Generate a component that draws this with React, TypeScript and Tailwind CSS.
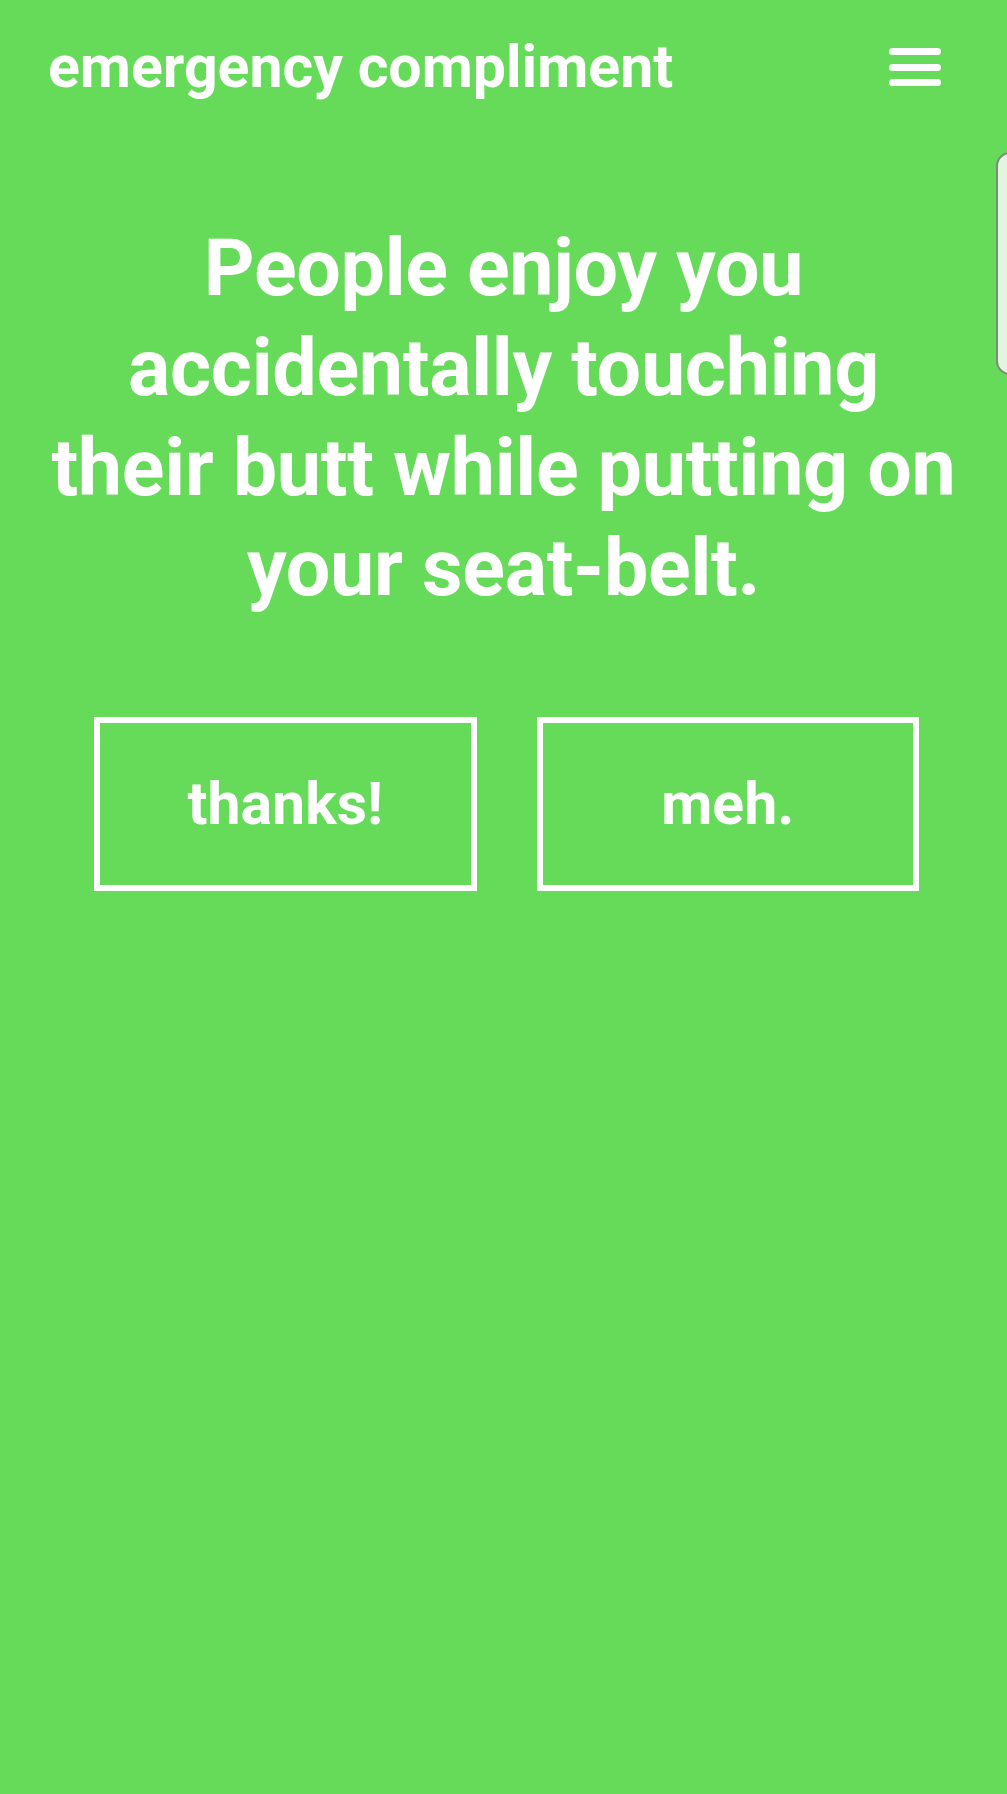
export default function App() {
  return (
    <div className="relative min-h-[1794px] w-full overflow-hidden bg-[#66db5a] font-['Roboto',sans-serif] text-white">
      <header className="flex items-center justify-between pl-12 pr-[66px] pt-[33px]">
        <h1 className="text-[59px] font-bold leading-[68px]">emergency compliment</h1>
        <svg width="52" height="38" viewBox="0 0 52 38" aria-label="menu">
          <rect x="0" y="0" width="52" height="7" rx="3.5" fill="white" />
          <rect x="0" y="16" width="52" height="7" rx="3.5" fill="white" />
          <rect x="0" y="31" width="52" height="7" rx="3.5" fill="white" />
        </svg>
      </header>

      <main className="flex flex-col items-center">
        <p className="mt-[117px] px-10 text-center text-[79px] font-bold leading-[100px] tracking-[-0.3px]">
          People enjoy you accidentally touching their butt while putting on your seat-belt.
        </p>

        <div className="mt-[99px] flex w-full gap-[60px] pl-[94px] pr-[88px]">
          <button className="flex h-[174px] flex-1 items-center justify-center border-[6px] border-white text-[59px] font-bold">
            thanks!
          </button>
          <button className="flex h-[174px] flex-1 items-center justify-center border-[6px] border-white text-[59px] font-bold">
            meh.
          </button>
        </div>
      </main>

      {/* edge panel handle peeking from the right */}
      <div className="absolute left-[996px] top-[152px] h-[223px] w-[40px] rounded-l-[14px] border-2 border-[#7d8b7a] bg-[#e2f5de]" />
    </div>
  );
}
